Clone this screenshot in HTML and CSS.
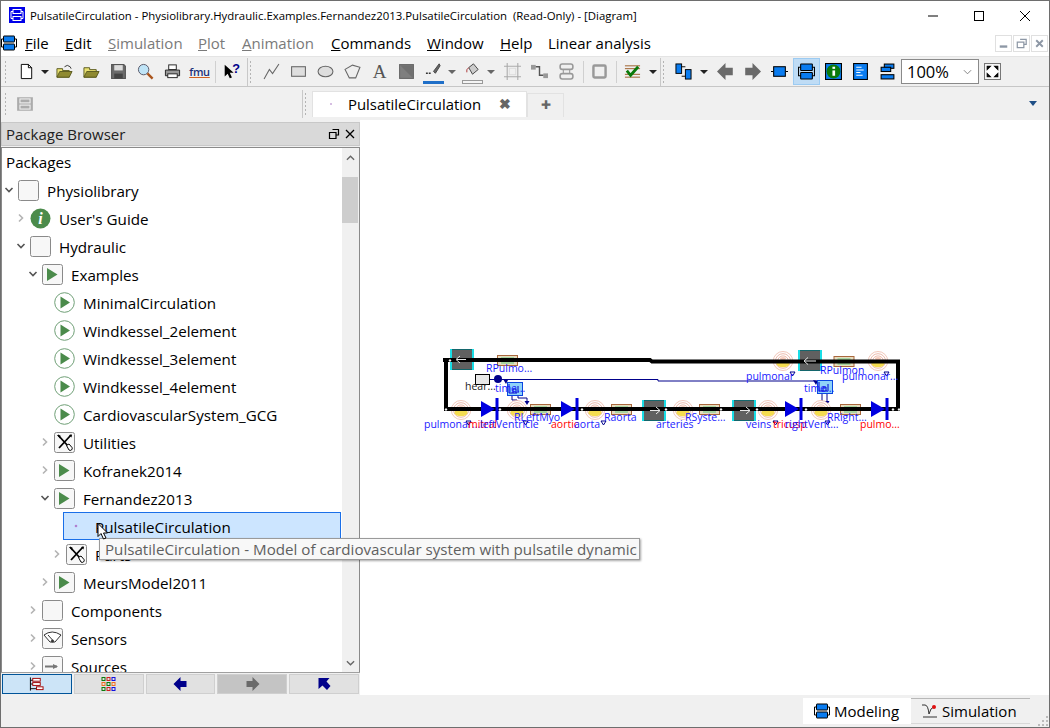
FILE: index.html
```html
<!DOCTYPE html>
<html lang="en">
<head>
    <meta charset="UTF-8">
    <title>PulsatileCirculation - Physiolibrary.Hydraulic.Examples.Fernandez2013.PulsatileCirculation</title>
    <link rel="stylesheet" href="styles.css">
</head>
<body>
<svg class="defs" width="0" height="0">
    <defs>
        <symbol id="logo" viewBox="0 0 16 16">
            <rect x="2.500" y="1" width="11" height="6" rx=".5" fill="#0a7cf0" stroke="#000"/>
            <rect x="2.500" y="9" width="11" height="6" rx=".5" fill="#0a7cf0" stroke="#000"/>
            <path d="M2.500 4H.5V12H2.500M13.500 4H15.500V12H13.500" fill="none" stroke="#000"/>
        </symbol>
        <symbol id="box" viewBox="0 0 21 21">
            <rect x=".5" y=".5" width="20" height="20" rx="2" fill="#f7f7f7" stroke="#8a8a8a"/>
        </symbol>
        <symbol id="pkg-run" viewBox="0 0 21 21">
            <rect x=".5" y=".5" width="20" height="20" rx="2" fill="#f7f7f7" stroke="#8a8a8a"/>
            <path d="M5 4L15.500 10.500L5 17Z" fill="#4b8b4b"/>
        </symbol>
        <symbol id="model-run" viewBox="0 0 21 21">
            <circle cx="10.500" cy="10.500" r="9.800" fill="#fff" stroke="#6f9f76"/>
            <path d="M6.500 4.500L16 10.500L6.500 16.500Z" fill="#4b8b4b"/>
        </symbol>
        <symbol id="pkg-tool" viewBox="0 0 21 21">
            <rect x=".5" y=".5" width="20" height="20" rx="2" fill="#f7f7f7" stroke="#8a8a8a"/>
            <path d="M4 3L14 14M17 3L5 16" stroke="#000" stroke-width="1.800" fill="none"/>
            <path d="M3 3L6.500 3.500L6 6.500ZM15 3L18 2.500L17.500 5.500Z" fill="#000"/>
            <path d="M12.500 13.500L15 12L18 15.500A2 2 0 0 1 15 18Z" fill="#fff" stroke="#000"/>
        </symbol>
        <symbol id="chev-down" viewBox="0 0 10 10">
            <path d="M1.500 3L5 6.500L8.500 3" fill="none" stroke="#555" stroke-width="1.600"/>
        </symbol>
        <symbol id="chev-right" viewBox="0 0 10 10">
            <path d="M3 1.500L6.500 5L3 8.500" fill="none" stroke="#b4b4b4" stroke-width="1.600"/>
        </symbol>
        <symbol id="elast" viewBox="0 0 20 20">
            <ellipse cx="10" cy="10" rx="9.700" ry="9.500" fill="#fff" stroke="#edb9a8" stroke-width=".8"/>
            <ellipse cx="10" cy="10" rx="7.500" ry="7.300" fill="none" stroke="#e9a896" stroke-width=".8"/>
            <ellipse cx="10" cy="10" rx="5.300" ry="5.100" fill="none" stroke="#e9a896" stroke-width=".8"/>
            <ellipse cx="10" cy="12.500" rx="6.500" ry="3.800" fill="#f4dc50"/>
            <ellipse cx="10" cy="7.500" rx="3" ry="1.500" fill="#f6cbbb"/>
        </symbol>
        <symbol id="resist" viewBox="0 0 21 11">
            <rect x=".5" y=".5" width="20" height="10" fill="#e7dcc0" stroke="#a9683c"/>
            <rect x="4" y="2" width="13" height="7" fill="#a8d4a0"/>
            <rect x="4" y="4.200" width="13" height="2.600" fill="#e86a50"/>
        </symbol>
        <symbol id="invert" viewBox="0 0 24 21">
            <rect width="24" height="21" fill="#606060"/>
            <path d="M0 .5H24M0 20.500H24" stroke="#14666c"/>
            <path d="M1 0V21M23 0V21" stroke="#19dde6" stroke-width="2"/>
        </symbol>
        <symbol id="valve" viewBox="0 0 18 22">
            <path d="M0 3L14 11L0 19Z" fill="#0000e0"/>
            <rect x="14.500" y="0" width="3" height="22" fill="#0000e0"/>
        </symbol>
        <symbol id="timer" viewBox="0 0 16 14">
            <rect x=".5" y=".5" width="15" height="13" fill="#8fd3f8" stroke="#0a46e0"/>
            <path d="M2 2V11H10M6 11V7H9V11M11 4V11" fill="none" stroke="#0000d0"/>
        </symbol>
    </defs>
</svg>

<div class="window">
    <header class="titlebar">
        <svg class="app-icon" viewBox="0 0 16 16">
            <rect width="16" height="16" fill="#0000e8"/>
            <rect x="4" y="2.500" width="8" height="4" fill="none" stroke="#fff"/>
            <rect x="4" y="9.500" width="8" height="4" fill="none" stroke="#fff"/>
            <path d="M4 4.500H2V11.500H4M12 4.500H14V11.500H12" fill="none" stroke="#fff"/>
        </svg>
        <span class="title-text">PulsatileCirculation - Physiolibrary.Hydraulic.Examples.Fernandez2013.PulsatileCirculation&nbsp; (Read-Only) - [Diagram]</span>
        <div class="win-btns">
            <svg viewBox="0 0 46 28"><path d="M18 15H28" stroke="#000"/></svg>
            <svg viewBox="0 0 46 28"><rect x="18.500" y="10.500" width="9" height="9" fill="none" stroke="#000"/></svg>
            <svg viewBox="0 0 46 28"><path d="M18 10L28 20M28 10L18 20" stroke="#000" fill="none"/></svg>
        </div>
    </header>

    <nav class="menubar">
        <svg class="menu-logo"><use href="#logo"/></svg>
        <span class="menu-item m-file"><u>F</u>ile</span>
        <span class="menu-item m-edit"><u>E</u>dit</span>
        <span class="menu-item off m-sim"><u>S</u>imulation</span>
        <span class="menu-item off m-plot"><u>P</u>lot</span>
        <span class="menu-item off m-anim"><u>A</u>nimation</span>
        <span class="menu-item m-cmd"><u>C</u>ommands</span>
        <span class="menu-item m-win"><u>W</u>indow</span>
        <span class="menu-item m-help"><u>H</u>elp</span>
        <span class="menu-item m-lin">Linear analysis</span>
        <div class="mdi-btns">
            <span class="mdi-btn"><svg viewBox="0 0 16 16"><rect x="4" y="10" width="8" height="2.500" fill="#8d97a5"/></svg></span>
            <span class="mdi-btn"><svg viewBox="0 0 16 16"><path d="M6.500 3.500H13V9H10.500M3.500 6.500H10.500V12.500H3.500Z" fill="none" stroke="#8d97a5" stroke-width="1.300"/></svg></span>
            <span class="mdi-btn"><svg viewBox="0 0 16 16"><path d="M4.500 4.500L11.500 11.500M11.500 4.500L4.500 11.500" stroke="#8d97a5" stroke-width="2"/></svg></span>
        </div>
    </nav>

    <div class="toolbar">
        <i class="handle first"></i>
        <span class="tb"><svg viewBox="0 0 16 18"><path d="M2.500 1.500H10L13.500 5V16.500H2.500Z" fill="#fff" stroke="#000"/><path d="M10 1.500V5H13.500" fill="none" stroke="#000"/></svg></span>
        <i class="drop dark tight"></i>
        <span class="tb"><svg viewBox="0 0 18 16"><path d="M1 14V5H7V7H14V14Z" fill="#e8e070" stroke="#5a5a20"/><path d="M1 14L4 8H17L14 14Z" fill="#8f8a30" stroke="#5a5a20"/><path d="M9 3Q12 0 15 3L16 5" fill="none" stroke="#333"/></svg></span>
        <span class="tb"><svg viewBox="0 0 18 16"><path d="M1 14V4H7V6H14V14Z" fill="#e8e070" stroke="#5a5a20"/><path d="M1 14L4 8H17L14 14Z" fill="#8f8a30" stroke="#5a5a20"/></svg></span>
        <span class="tb"><svg viewBox="0 0 16 16"><path d="M1.500 1.500H13L14.500 3V14.500H1.500Z" fill="#6b6b6b" stroke="#555"/><rect x="4" y="2" width="8" height="5" fill="#ddd"/><rect x="4" y="10" width="8" height="4.500" fill="#444"/></svg></span>
        <span class="tb"><svg viewBox="0 0 18 18"><circle cx="7" cy="7" r="5.500" fill="#bfe4f7" stroke="#556"/><path d="M11 11L16.500 16.500" stroke="#a9541c" stroke-width="2.500"/></svg></span>
        <span class="tb"><svg viewBox="0 0 18 16"><rect x="5" y="1" width="8" height="5" fill="#fff" stroke="#222"/><path d="M1.500 6.500H16.500V12.500H1.500Z" fill="#999" stroke="#222"/><rect x="4" y="10.500" width="10" height="4" fill="#fff" stroke="#222"/></svg></span>
        <span class="tb fmu">fmu</span>
        <i class="sep tight"></i>
        <span class="tb"><svg viewBox="0 0 20 18"><path d="M2 1V15L5.500 11.500L8 17L10.500 16L8 10.500H12.500Z" fill="#000"/><text x="11" y="11" class="help-q">?</text></svg></span>
        <i class="tb-break"></i>
        <i class="handle"></i>
        <span class="tb"><svg viewBox="0 0 16 16"><path d="M1 15L6 6L9 10L15 1" fill="none" stroke="#666"/></svg></span>
        <span class="tb"><svg viewBox="0 0 16 14"><rect x="1.500" y="2.500" width="13" height="9" fill="#dedede" stroke="#666"/></svg></span>
        <span class="tb"><svg viewBox="0 0 16 14"><ellipse cx="8" cy="7" rx="7" ry="5" fill="#dedede" stroke="#666"/></svg></span>
        <span class="tb"><svg viewBox="0 0 16 14"><path d="M1 5L8 1L15 3L11 13H5Z" fill="#eee" stroke="#666"/></svg></span>
        <span class="tb shape-a">A</span>
        <span class="tb"><svg viewBox="0 0 16 16"><rect x="1.500" y="1.500" width="13" height="13" fill="#7f7f7f" stroke="#666"/><path d="M2 2L14 14V2Z" fill="#707070"/></svg></span>
        <span class="tb pen"><svg viewBox="0 0 18 14"><path d="M1 11H7" stroke="#333" stroke-dasharray="2 1" stroke-width="1.500"/><path d="M9 9L15 1L16 3L11 11Z" fill="#666" stroke="#444"/></svg><b class="pen-bar"></b></span>
        <i class="drop"></i>
        <span class="tb pen"><svg viewBox="0 0 18 14"><path d="M5 5L10 1L15 7L9 12Z" fill="#ccc" stroke="#444"/><path d="M5 5Q2 7 3 10" fill="none" stroke="#a33"/></svg><b class="bucket-bar"></b></span>
        <i class="drop wide"></i>
        <span class="tb"><svg viewBox="0 0 16 16"><path d="M3 0V16M13 0V16M0 3H16M0 13H16" stroke="#aaa"/><rect x="5" y="5" width="6" height="6" fill="none" stroke="#ddd"/></svg></span>
        <span class="tb"><svg viewBox="0 0 18 16"><rect x="0" y="1" width="5" height="5" fill="#999"/><rect x="13" y="10" width="5" height="5" fill="#999"/><path d="M5 3H9V12H13" fill="none" stroke="#555" stroke-width="1.500"/></svg></span>
        <span class="tb"><svg viewBox="0 0 14 16"><rect x="1" y="1" width="12" height="5" rx="2" fill="none" stroke="#999" stroke-width="1.500"/><rect x="1" y="10" width="12" height="5" rx="2" fill="none" stroke="#999" stroke-width="1.500"/><path d="M4 6V10M10 6V10" stroke="#999"/></svg></span>
        <i class="sep"></i>
        <span class="tb"><svg viewBox="0 0 14 14"><rect x="2" y="2" width="10" height="10" rx="1" fill="none" stroke="#999" stroke-width="2"/></svg></span>
        <i class="sep"></i>
        <span class="tb"><svg viewBox="0 0 18 16"><path d="M1 2H17M1 5H17M1 11H17M1 14H17" stroke="#9a5a24"/><path d="M3 7L7 12L15 3" fill="none" stroke="#0a7a0a" stroke-width="3"/></svg></span>
        <i class="drop dark shifted"></i>
        <i class="tb-break"></i>
        <i class="handle last"></i>
        <span class="tb"><svg viewBox="0 0 18 18"><rect x="1" y="1" width="6" height="10" fill="#0a7cf0" stroke="#000"/><rect x="11" y="7" width="6" height="10" fill="#0a7cf0" stroke="#000"/><path d="M7 4H11M7 14H11" stroke="#000"/></svg></span>
        <i class="drop dark narrow shifted"></i>
        <span class="tb"><svg viewBox="0 0 14 14"><path d="M7 0V4H13V10H7V14L0 7Z" fill="#6a6a6a"/></svg></span>
        <span class="tb"><svg viewBox="0 0 14 14"><path d="M7 0V4H1V10H7V14L14 7Z" fill="#6a6a6a"/></svg></span>
        <span class="tb"><svg viewBox="0 0 16 10"><rect x="2.500" y=".5" width="11" height="9" fill="#0a7cf0" stroke="#000"/><path d="M0 5H2M14 5H16" stroke="#000"/></svg></span>
        <span class="tb active"><svg><use href="#logo"/></svg></span>
        <span class="tb"><svg viewBox="0 0 16 16"><rect x=".5" y=".5" width="15" height="15" fill="#0a7cf0" stroke="#000"/><circle cx="8" cy="8" r="6.500" fill="#0a7a0a"/><rect x="7" y="7" width="2.500" height="5" fill="#fff"/><rect x="7" y="3.500" width="2.500" height="2" fill="#fff"/></svg></span>
        <span class="tb"><svg viewBox="0 0 14 16"><rect x=".5" y=".5" width="13" height="15" fill="#0a7cf0" stroke="#000"/><path d="M3 4H8M3 6.500H10M3 9H7M3 11.500H9" stroke="#fff"/></svg></span>
        <span class="tb"><svg viewBox="0 0 14 16"><rect x="4" y="1" width="9" height="4" fill="#0a7cf0" stroke="#000"/><rect x="1" y="4" width="9" height="4" fill="#0a7cf0" stroke="#000"/><rect x="1" y="11" width="12" height="4" fill="#0a7cf0" stroke="#000"/></svg></span>
        <div class="combo"><span>100%</span><svg viewBox="0 0 10 6"><path d="M1 1L5 5L9 1" fill="none" stroke="#777"/></svg></div>
        <span class="tb"><svg viewBox="0 0 16 16"><rect x=".5" y=".5" width="15" height="15" fill="#fff" stroke="#777"/><path d="M3 3L6 3L3 6ZM13 3V6L10 3ZM3 13V10L6 13ZM13 13H10L13 10Z" stroke="#000"/></svg></span>
    </div>

    <div class="secondbar">
        <div class="dock-left">
            <i class="handle first"></i>
            <svg class="dock-icon" viewBox="0 0 16 14"><rect x="1" y="1" width="14" height="12" fill="#ababab"/><rect x="3.500" y="2.500" width="9" height="3.500" fill="none" stroke="#eee"/><rect x="3.500" y="8" width="9" height="3.500" fill="none" stroke="#eee"/></svg>
        </div>
        <i class="tb-break"></i>
        <i class="handle last"></i>
        <div class="tabs">
            <div class="tab current"><svg class="tab-dot" viewBox="0 0 4 4"><circle cx="2" cy="2" r="1" fill="#c9a8d8"/></svg><span>PulsatileCirculation</span><b class="tab-x">✖</b></div>
            <div class="tab plus">✚</div>
        </div>
        <i class="tabs-menu"></i>
    </div>

    <main class="workarea">
        <aside class="browser">
            <div class="browser-title">
                <span>Package Browser</span>
                <svg viewBox="0 0 12 12"><path d="M4.500 1.500H10.500V7H8M1.500 4.500H8V10.500H1.500Z" fill="none" stroke="#000" stroke-width="1.200"/></svg>
                <svg viewBox="0 0 12 12"><path d="M2 2L10 10M10 2L2 10" stroke="#000" stroke-width="1.300"/></svg>
            </div>
            <div class="tree-frame">
                <div class="tree">
                    <div class="row"><span class="head">Packages</span></div>
                    <div class="row lv0"><svg class="chev"><use href="#chev-down"/></svg><svg class="ico"><use href="#box"/></svg>Physiolibrary</div>
                    <div class="row lv1"><svg class="chev"><use href="#chev-right"/></svg><svg class="ico" viewBox="0 0 21 21"><circle cx="10.500" cy="10.500" r="10" fill="#4b8b4b"/><text x="10.500" y="16" class="info-i">i</text></svg>User's Guide</div>
                    <div class="row lv1"><svg class="chev"><use href="#chev-down"/></svg><svg class="ico"><use href="#box"/></svg>Hydraulic</div>
                    <div class="row lv2"><svg class="chev"><use href="#chev-down"/></svg><svg class="ico"><use href="#pkg-run"/></svg>Examples</div>
                    <div class="row lv3"><i class="chev"></i><svg class="ico"><use href="#model-run"/></svg>MinimalCirculation</div>
                    <div class="row lv3"><i class="chev"></i><svg class="ico"><use href="#model-run"/></svg>Windkessel_2element</div>
                    <div class="row lv3"><i class="chev"></i><svg class="ico"><use href="#model-run"/></svg>Windkessel_3element</div>
                    <div class="row lv3"><i class="chev"></i><svg class="ico"><use href="#model-run"/></svg>Windkessel_4element</div>
                    <div class="row lv3"><i class="chev"></i><svg class="ico"><use href="#model-run"/></svg>CardiovascularSystem_GCG</div>
                    <div class="row lv3"><svg class="chev"><use href="#chev-right"/></svg><svg class="ico"><use href="#pkg-tool"/></svg>Utilities</div>
                    <div class="row lv3"><svg class="chev"><use href="#chev-right"/></svg><svg class="ico"><use href="#pkg-run"/></svg>Kofranek2014</div>
                    <div class="row lv3"><svg class="chev"><use href="#chev-down"/></svg><svg class="ico"><use href="#pkg-run"/></svg>Fernandez2013</div>
                    <div class="row selected"><svg class="sel-dot" viewBox="0 0 4 4"><circle cx="2" cy="2" r="1.300" fill="#b080d0"/></svg>PulsatileCirculation</div>
                    <div class="row lv4"><svg class="chev"><use href="#chev-right"/></svg><svg class="ico"><use href="#pkg-tool"/></svg>Parts</div>
                    <div class="row lv3"><svg class="chev"><use href="#chev-right"/></svg><svg class="ico"><use href="#pkg-run"/></svg>MeursModel2011</div>
                    <div class="row lv2"><svg class="chev"><use href="#chev-right"/></svg><svg class="ico"><use href="#box"/></svg>Components</div>
                    <div class="row lv2"><svg class="chev"><use href="#chev-right"/></svg><svg class="ico" viewBox="0 0 21 21"><rect x=".5" y=".5" width="20" height="20" rx="2" fill="#f7f7f7" stroke="#8a8a8a"/><path d="M2 7Q10 1 19 7L13 14H8Z" fill="#fff" stroke="#333"/><path d="M6 7L10.500 12" stroke="#333"/><circle cx="10.500" cy="13" r="1.500" fill="#333"/></svg>Sensors</div>
                    <div class="row lv2"><svg class="chev"><use href="#chev-right"/></svg><svg class="ico" viewBox="0 0 21 21"><rect x=".5" y=".5" width="20" height="20" rx="2" fill="#f7f7f7" stroke="#8a8a8a"/><path d="M3 10.500H15" stroke="#777" stroke-width="2"/><path d="M11 8L16 10.500L11 13Z" fill="#777"/></svg>Sources</div>
                </div>
                <div class="scroll">
                    <svg class="scroll-arrow" viewBox="0 0 10 6"><path d="M1 5L5 1L9 5" fill="none" stroke="#666" stroke-width="1.500"/></svg>
                    <div class="scroll-thumb"></div>
                    <svg class="scroll-arrow bottom" viewBox="0 0 10 6"><path d="M1 1L5 5L9 1" fill="none" stroke="#666" stroke-width="1.500"/></svg>
                </div>
            </div>
            <div class="browser-btns">
                <span class="bb on"><svg viewBox="0 0 16 14"><path d="M1.500 0V14M1.500 3H5M1.500 7H5M1.500 12H8" stroke="#000" fill="none"/><rect x="4" y="1" width="8" height="3" fill="#fff" stroke="#a00000"/><rect x="4" y="5.500" width="8" height="3" fill="#fff" stroke="#a00000"/><rect x="8" y="10" width="7" height="3" fill="#fff" stroke="#a00000"/></svg></span>
                <span class="bb"><svg viewBox="0 0 14 14"><rect x=".5" y=".5" width="3" height="3" fill="none" stroke="#0a7a0a"/><rect x="5.500" y=".5" width="3" height="3" fill="none" stroke="#d02020"/><rect x="10.500" y=".5" width="3" height="3" fill="none" stroke="#1010e0"/><rect x=".5" y="5.500" width="3" height="3" fill="none" stroke="#f07020"/><rect x="5.500" y="5.500" width="3" height="3" fill="none" stroke="#0a7a0a"/><rect x="10.500" y="5.500" width="3" height="3" fill="none" stroke="#f07020"/><rect x=".5" y="10.500" width="3" height="3" fill="none" stroke="#0a7a0a"/><rect x="5.500" y="10.500" width="3" height="3" fill="none" stroke="#d02020"/><rect x="10.500" y="10.500" width="3" height="3" fill="none" stroke="#1010e0"/></svg></span>
                <span class="bb"><svg viewBox="0 0 14 14"><path d="M7 0V4H13V10H7V14L0 7Z" fill="#00008b"/></svg></span>
                <span class="bb dim"><svg viewBox="0 0 14 14"><path d="M7 0V4H1V10H7V14L14 7Z" fill="#6a6a6a"/></svg></span>
                <span class="bb"><svg viewBox="0 0 14 14"><path d="M1 1H12L9 4.500L13 9L9.500 13L5 8.500L1 12Z" fill="#00008b"/></svg></span>
            </div>
        </aside>

        <section class="canvas">
            <svg class="diagram" viewBox="360 122 690 573">
                <path d="M490 379.500H658V381H820" class="signal"/>
                <path d="M512 395V400H517V403M518 395V398H527V403" class="signal"/>
                <path d="M822 394V402M827 394V402" class="signal"/>
                <path d="M514.500 401h5l-2.500 4ZM524.500 401h5l-2.500 4ZM819.500 401h5l-2.500 4ZM824.500 401h5l-2.500 4ZM503 379l5 1l-2 4ZM813 380l5 1l-2 4Z" class="arrowhead"/>

                <use href="#elast" x="451" y="400" width="20" height="20"/>
                <use href="#elast" x="507" y="400" width="20" height="20"/>
                <use href="#elast" x="585" y="400" width="20" height="20"/>
                <use href="#elast" x="673" y="400" width="20" height="20"/>
                <use href="#elast" x="758" y="400" width="20" height="20"/>
                <use href="#elast" x="811" y="400" width="20" height="20"/>
                <use href="#elast" x="773" y="351" width="20" height="20"/>
                <use href="#elast" x="868" y="351" width="20" height="20"/>

                <use href="#resist" x="497" y="355" width="21" height="11"/>
                <use href="#resist" x="530" y="404" width="21" height="11"/>
                <use href="#resist" x="611" y="404" width="21" height="11"/>
                <use href="#resist" x="699" y="404" width="21" height="11"/>
                <use href="#resist" x="840" y="404" width="21" height="11"/>
                <use href="#resist" x="831" y="356" width="26" height="11" preserveAspectRatio="none"/>

                <use href="#invert" x="450" y="349" width="24" height="21"/>
                <use href="#invert" x="642" y="400" width="24" height="21"/>
                <use href="#invert" x="732" y="400" width="24" height="21"/>
                <use href="#invert" x="798" y="350" width="24" height="21"/>

                <g class="wires">
                    <path d="M443 360H650L652 361.500H898V409M446 360V409H900"/>
                </g>
                <path d="M466 359.500H457M460 356L456 359.500L460 363M816 361H805M808 357.500L804 361L808 364.500M650 410.500H660M656 407L660 410.500L656 414M740 410.500H750M746 407L750 410.500L746 414" class="inv-arrow"/>

                <use href="#valve" x="481" y="398" width="18" height="22"/>
                <use href="#valve" x="561" y="398" width="18" height="22"/>
                <use href="#valve" x="785" y="398" width="18" height="22"/>
                <use href="#valve" x="871" y="398" width="18" height="22"/>

                <path d="M450 359l1.500 1.500l-1.500 1.500l-1.500-1.500ZM446 408l1.500 1.500l-1.500 1.500l-1.500-1.500ZM500 408l1.500 1.500l-1.500 1.500l-1.500-1.500ZM582 408l1.500 1.500l-1.500 1.500l-1.500-1.500ZM666 408l1.500 1.500l-1.500 1.500l-1.500-1.500ZM721 408l1.500 1.500l-1.500 1.500l-1.500-1.500ZM757 408l1.500 1.500l-1.500 1.500l-1.500-1.500ZM806 408l1.500 1.500l-1.500 1.500l-1.500-1.500ZM893 408l1.500 1.500l-1.500 1.500l-1.500-1.500ZM899 408l1.500 1.500l-1.500 1.500l-1.500-1.500Z" class="ports"/>

                <rect x="475.500" y="374.500" width="14" height="10" class="heart"/>
                <circle cx="498" cy="379" r="4" class="dot"/>
                <use href="#timer" x="507" y="382" width="16" height="14"/>
                <use href="#timer" x="817" y="380" width="16" height="14"/>

                <path d="M466 421h5l-2.500 4ZM523 421h5l-2.500 4ZM601 421h5l-2.500 4ZM790 372h5l-2.500 4ZM884 372h5l-2.500 4ZM773 421h5l-2.500 4ZM825 421h5l-2.500 4Z" class="tri"/>

                <text x="486" y="372" class="lbl">RPulmo...</text>
                <text x="465" y="390" class="lbl plain">hear...</text>
                <text x="495" y="392" class="lbl">time...</text>
                <text x="424" y="428" class="lbl">pulmonar...</text>
                <text x="468" y="428" class="lbl red">mitral</text>
                <text x="480" y="428" class="lbl">leftVentricle</text>
                <text x="514" y="421" class="lbl">RLeftMyo</text>
                <text x="551" y="428" class="lbl red">aortic</text>
                <text x="574" y="428" class="lbl">aorta</text>
                <text x="604" y="421" class="lbl">Raorta</text>
                <text x="656" y="428" class="lbl">arteries</text>
                <text x="685" y="421" class="lbl">RSyste...</text>
                <text x="746" y="428" class="lbl">veins</text>
                <text x="773" y="428" class="lbl red">tricusp</text>
                <text x="785" y="428" class="lbl">rightVent...</text>
                <text x="827" y="421" class="lbl">RRight...</text>
                <text x="860" y="428" class="lbl red">pulmo...</text>
                <text x="746" y="380" class="lbl">pulmonar</text>
                <text x="820" y="374" class="lbl">RPulmon</text>
                <text x="842" y="380" class="lbl">pulmonar...</text>
                <text x="804" y="392" class="lbl">time...</text>
            </svg>
        </section>
    </main>

    <footer class="statusbar">
        <div class="mode current"><svg><use href="#logo"/></svg>Modeling</div>
        <div class="mode"><svg viewBox="0 0 16 14"><path d="M0 1H3Q6 1 7 10Q8 4 13 2M1 13H15" fill="none" stroke="#333"/><circle cx="12" cy="3" r="2" fill="#e01010"/></svg>Simulation</div>
        <svg class="grip" viewBox="0 0 10 10"><path d="M8 0h2v2h-2ZM4 4h2v2h-2ZM8 4h2v2h-2ZM0 8h2v2h-2ZM4 8h2v2h-2ZM8 8h2v2h-2Z" fill="#bbb"/></svg>
    </footer>

    <div class="tooltip">PulsatileCirculation - Model of cardiovascular system with pulsatile dynamic</div>
    <svg class="cursor" viewBox="0 0 12 18"><path d="M1 1V14L4 11L6.500 16.500L9 15.500L6.500 10.500H10.500Z" fill="#fff" stroke="#000"/></svg>
</div>
</body>
</html>
```

FILE: styles.css
```css
* {
    box-sizing: border-box;
}
html, body {
    margin: 0;
    padding: 0;
}
body {
    font-family: 'Open Sans', sans-serif;
    color: #000;
    background-color: #fff;
}
i, b {
    font-style: normal;
}
.defs {
    position: absolute;
}
.window {
    position: relative;
    width: 1050px;
    height: 728px;
    overflow: hidden;
    display: flex;
    flex-direction: column;
    border: 1px solid #6e6e6e;
}

/* title and menu */
.titlebar {
    height: 28px;
    display: flex;
    align-items: center;
    padding-left: 8px;
    flex: none;
}
.app-icon {
    width: 16px;
    height: 16px;
}
.title-text {
    margin-left: 5px;
    font-size: 11.4px;
}
.win-btns {
    margin-left: auto;
    display: flex;
    margin-right: 1px;
}
.win-btns svg {
    width: 46px;
    height: 28px;
}
.menubar {
    height: 27px;
    display: flex;
    align-items: center;
    position: relative;
    flex: none;
    font-size: 15px;
}
.menu-logo {
    width: 16px;
    height: 16px;
}
.menu-item {
    position: absolute;
    top: 3px;
    line-height: 22px;
}
.menu-item.off {
    color: #7a7a7a;
}
.m-file { left: 24px; }
.m-edit { left: 64px; }
.m-sim { left: 107px; }
.m-plot { left: 197px; }
.m-anim { left: 241px; }
.m-cmd { left: 330px; }
.m-win { left: 426px; }
.m-help { left: 499px; }
.m-lin { left: 547px; }
.mdi-btns {
    margin-left: auto;
    display: flex;
    gap: 1px;
    margin-right: 1px;
    margin-top: 2px;
}
.mdi-btn {
    width: 17px;
    height: 17px;
    border: 1px solid #e0e0e0;
    display: flex;
}

/* toolbars */
.toolbar {
    height: 31px;
    flex: none;
    display: flex;
    align-items: center;
    background-color: #f0f0f0;
    border-top: 1px solid #e4e4e4;
    border-bottom: 1px solid #c6c6c6;
}
.handle {
    width: 3px;
    height: 24px;
    margin: 0 6px 0 1px;
    flex: none;
    background-image: radial-gradient(circle, #b4b4b4 1px, transparent 1px);
    background-size: 3px 4px;
}
.handle.first {
    margin-left: 3px;
}
.handle.last {
    margin-right: 5px;
}
.tb {
    width: 27px;
    height: 27px;
    flex: none;
    display: flex;
    align-items: center;
    justify-content: center;
    position: relative;
}
.tb svg {
    width: 17px;
    height: 17px;
}
.tb.active {
    background-color: #bfdcf5;
    border: 1px solid #9ccbf2;
}
.fmu {
    font-size: 11px;
    font-weight: 600;
    color: #20307a;
    letter-spacing: -0.3px;
    text-decoration: underline;
    text-decoration-color: #d06020;
}
.shape-a {
    font-family: 'Liberation Serif', serif;
    font-size: 19px;
    color: #555;
}
.help-q {
    font-family: 'Liberation Sans', sans-serif;
    font-size: 15px;
    font-weight: 700;
    fill: #00008b;
}
.pen svg {
    margin-top: -5px;
}
.pen-bar {
    position: absolute;
    left: 3px;
    bottom: 1px;
    width: 21px;
    height: 3px;
    background-color: #1f6fc8;
}
.bucket-bar {
    position: absolute;
    left: 3px;
    bottom: 1px;
    width: 21px;
    height: 4px;
    border: 1px solid #999;
    background-color: #f4f4f4;
}
.drop {
    width: 12px;
    height: 27px;
    flex: none;
    position: relative;
}
.drop::after {
    content: "";
    position: absolute;
    left: 1px;
    top: 12px;
    border-style: solid;
    border-width: 4px 4px 0;
    border-color: #666 transparent transparent;
}
.drop.dark::after {
    border-top-color: #222;
}
.drop.tight {
    width: 11px;
}
.drop.wide {
    width: 13px;
}
.drop.narrow {
    width: 15px;
}
.drop.shifted::after {
    left: 3px;
}
.sep {
    width: 1px;
    height: 22px;
    margin: 0 2px 0 3px;
    background-color: #d0d0d0;
    flex: none;
}
.sep.tight {
    margin-left: 2px;
}
.tb-break {
    width: 1px;
    height: 28px;
    margin-left: 2px;
    background-color: #c8c8c8;
    flex: none;
}
.combo {
    width: 78px;
    height: 25px;
    flex: none;
    border: 1px solid #8a8a8a;
    background-color: #fff;
    display: flex;
    align-items: center;
    padding: 0 6px 0 5px;
    font-size: 16.5px;
}
.combo svg {
    width: 9px;
    height: 6px;
    margin-left: auto;
}
.secondbar {
    height: 33px;
    flex: none;
    display: flex;
    align-items: center;
    background-color: #f0f0f0;
}
.dock-left {
    width: 299px;
    display: flex;
    align-items: center;
}
.dock-icon {
    width: 18px;
    height: 16px;
    margin-left: 3px;
}
.tabs {
    display: flex;
    align-items: flex-end;
    height: 100%;
    padding-bottom: 3px;
}
.tab {
    height: 26px;
    display: flex;
    align-items: center;
    padding-bottom: 2px;
    font-size: 14.9px;
    background-color: #fff;
    border: 1px solid #e2e2e2;
    border-bottom: none;
}
.tab.current {
    width: 215px;
    padding-left: 16px;
}
.tab-dot {
    width: 4px;
    height: 4px;
}
.tab.current span {
    margin-left: 15px;
}
.tab-x {
    margin-left: auto;
    margin-right: 15px;
    font-size: 14px;
    color: #666;
}
.tab.plus {
    width: 37px;
    height: 24px;
    justify-content: center;
    background-color: #f0f0f0;
    font-size: 12px;
    color: #666;
}
.tabs-menu {
    margin-left: auto;
    margin-right: 12px;
    border-style: solid;
    border-width: 5px 4.5px 0;
    border-color: #1f4f86 transparent transparent;
}

/* package browser */
.workarea {
    flex: 1;
    display: flex;
    min-height: 0;
}
.browser {
    width: 359px;
    flex: none;
    display: flex;
    flex-direction: column;
    background-color: #f0f0f0;
}
.browser-title {
    height: 24px;
    margin-top: 2px;
    flex: none;
    background-color: #d9d9d9;
    border: 1px solid #c8c8c8;
    display: flex;
    align-items: center;
    gap: 4px;
    padding: 0 3px 0 4px;
    font-size: 15px;
    color: #222;
}
.browser-title span {
    margin-right: auto;
}
.browser-title svg {
    width: 12px;
    height: 12px;
}
.tree-frame {
    flex: 1;
    min-height: 0;
    display: flex;
    margin-top: 1px;
    border: 1px solid #8a8a8a;
    border-bottom: none;
    background-color: #fff;
}
.tree {
    flex: 1;
    min-width: 0;
    overflow: hidden;
    font-size: 15.2px;
}
.row {
    height: 28px;
    padding-top: 2px;
    display: flex;
    align-items: center;
    white-space: nowrap;
}
.head {
    margin-left: 4px;
    margin-top: -2px;
}
.chev {
    width: 10px;
    height: 10px;
    flex: none;
    margin-right: 4px;
    margin-top: -2px;
}
.ico {
    width: 21px;
    height: 21px;
    flex: none;
    margin-right: 8px;
    margin-top: -2px;
}
.lv0 { padding-left: 2px; }
.lv1 { padding-left: 14px; }
.lv2 { padding-left: 26px; }
.lv3 { padding-left: 38px; }
.lv4 { padding-left: 50px; }
.row.selected {
    margin-left: 61px;
    margin-right: 1px;
    background-color: #cce5ff;
    border: 1px solid #1a6fe8;
    padding-left: 10px;
    height: 28px;
}
.sel-dot {
    width: 4px;
    height: 4px;
    margin-right: 17px;
    margin-top: -2px;
}
.info-i {
    font-family: 'Liberation Serif', serif;
    font-style: italic;
    font-weight: 700;
    font-size: 16px;
    fill: #fff;
    text-anchor: middle;
}
.scroll {
    width: 17px;
    flex: none;
    background-color: #f0f0f0;
    position: relative;
}
.scroll-arrow {
    position: absolute;
    left: 4px;
    top: 7px;
    width: 9px;
    height: 6px;
}
.scroll-arrow.bottom {
    top: auto;
    bottom: 6px;
}
.scroll-thumb {
    position: absolute;
    top: 29px;
    left: 0;
    width: 16px;
    height: 46px;
    background-color: #cdcdcd;
}
.browser-btns {
    height: 23px;
    flex: none;
    display: flex;
    gap: 2px;
    border-top: 1px solid #a0a0a0;
    padding: 1px;
}
.bb {
    flex: 1;
    display: flex;
    align-items: center;
    justify-content: center;
    background-color: #e1e1e1;
    border: 1px solid #cfcfcf;
}
.bb.on {
    background-color: #cce4f7;
    border-color: #005499;
}
.bb.dim {
    background-color: #c4c4c4;
}
.bb svg {
    width: 15px;
    height: 14px;
}

/* diagram */
.canvas {
    flex: 1;
    min-width: 0;
    background-color: #fff;
}
.diagram {
    display: block;
    width: 690px;
    height: 573px;
    margin-top: 2px;
}
.wires path {
    fill: none;
    stroke: #000;
    stroke-width: 4;
}
.signal {
    fill: none;
    stroke: #00008b;
    stroke-width: 1;
}
.arrowhead {
    fill: #00008b;
}
.inv-arrow {
    fill: none;
    stroke: #e8e8e8;
    stroke-width: 1;
}
.ports {
    fill: #f4f4f4;
}
.heart {
    fill: #e8e8e8;
    stroke: #000;
}
.dot {
    fill: #00008b;
}
.tri {
    fill: #fff;
    stroke: #00008b;
}
.lbl {
    font-family: 'Open Sans', sans-serif;
    font-size: 10.5px;
    fill: #1a1aff;
}
.lbl.red {
    fill: #ff0000;
}
.lbl.plain {
    fill: #222;
}

/* bottom bar */
.statusbar {
    height: 32px;
    flex: none;
    display: flex;
    align-items: flex-end;
    justify-content: flex-end;
    background-color: #f0f0f0;
    padding: 0 19px 3px 0;
    font-size: 15px;
    position: relative;
}
.mode {
    height: 26px;
    width: 119px;
    display: flex;
    align-items: center;
    gap: 4px;
    padding-left: 11px;
    border-top: 1px solid #b8b8b8;
    border-bottom: 1px solid #d8d8d8;
}
.mode.current {
    width: 108px;
    background-color: #fff;
    border: none;
}
.mode svg {
    width: 16px;
    height: 16px;
}
.grip {
    position: absolute;
    right: 1px;
    bottom: 1px;
    width: 10px;
    height: 10px;
}

/* things over the tree */
.tooltip {
    position: absolute;
    left: 98px;
    top: 537px;
    width: 541px;
    height: 22px;
    padding-left: 5px;
    line-height: 21px;
    font-size: 15.15px;
    color: #5f5f5f;
    background-color: #f8f8f8;
    border: 1px solid #9a9a9a;
    box-shadow: 1px 1px 2px rgba(0, 0, 0, 0.35);
    white-space: nowrap;
}
.cursor {
    position: absolute;
    left: 96px;
    top: 521px;
    width: 12px;
    height: 19px;
}
```
